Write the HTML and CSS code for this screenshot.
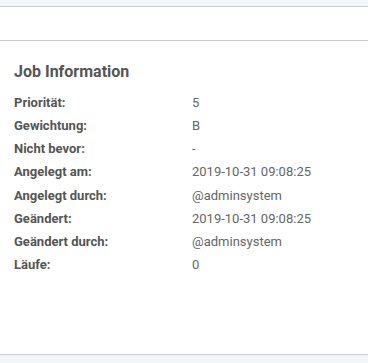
FILE: index.html
```html
<!DOCTYPE html>
<html>
<head>
<meta charset="utf-8">
<link rel="stylesheet" href="styles.css">
</head>
<body>
<div class="topbar"></div>
<div class="panel">
  <div class="panel-head"></div>
  <div class="panel-body">
    <h3 class="title">Job Information</h3>
    <dl class="info">
      <dt>Priorität:</dt><dd>5</dd>
      <dt>Gewichtung:</dt><dd>B</dd>
      <dt>Nicht bevor:</dt><dd>-</dd>
      <dt>Angelegt am:</dt><dd>2019-10-31 09:08:25</dd>
      <dt>Angelegt durch:</dt><dd>@adminsystem</dd>
      <dt>Geändert:</dt><dd>2019-10-31 09:08:25</dd>
      <dt>Geändert durch:</dt><dd>@adminsystem</dd>
      <dt>Läufe:</dt><dd>0</dd>
    </dl>
  </div>
</div>
<div class="bottombar"></div>
</body>
</html>
```
FILE: styles.css
```css
html, body {
  margin: 0;
  padding: 0;
}
body {
  background: #f1f6f9;
  font-family: Roboto, "Liberation Sans", sans-serif;
  height: 363px;
  overflow: hidden;
}
.topbar {
  height: 6px;
  background: #f1f6f9;
  border-bottom: 1px solid #c9cdd1;
}
.panel {
  background: #fff;
  height: 348px;
  border-bottom: 1px solid #c9cdd1;
  box-sizing: border-box;
}
.panel-head {
  height: 33px;
  border-bottom: 1px solid #c9cdd1;
}
.panel-body {
  padding: 20px 14px 0;
}
.title {
  margin: 0 0 8px;
  font-size: 16px;
  font-weight: 700;
  line-height: 22px;
  color: #555;
}
.info {
  margin: 0;
  display: grid;
  grid-template-columns: 178px 1fr;
  row-gap: 0;
  font-size: 13px;
  line-height: 23.15px;
}
.info dt {
  font-weight: 700;
  color: #555;
}
.info dd {
  margin: 0;
  color: #666;
}
```
